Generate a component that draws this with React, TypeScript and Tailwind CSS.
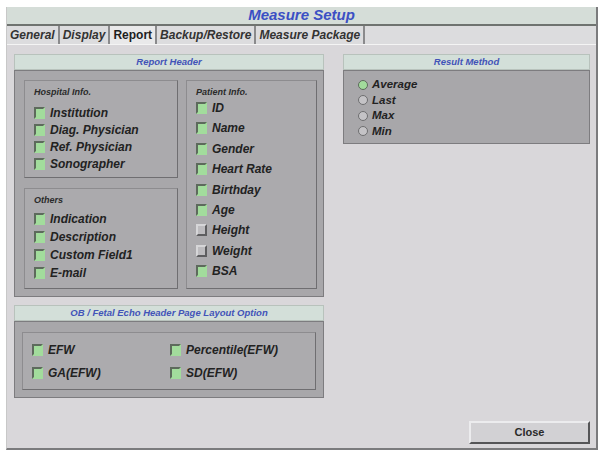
import clsx from "clsx";

const font = { fontFamily: '"Liberation Sans", Arial, sans-serif' };

type CheckProps = { label: string; on?: boolean };

const Check = ({ label, on = true }: CheckProps) => (
  <div className="flex items-center h-[17px]">
    <span
      className={clsx(
        "w-[11px] h-[12px] shrink-0 border-2",
        on
          ? "bg-[#a2dc9c] border-t-[#5d6a5c] border-l-[#5d6a5c] border-r-[#a2dc9c] border-b-[#a2dc9c]"
          : "bg-[#bdbcbf] border-t-[#d6d6d8] border-l-[#d6d6d8] border-r-[#5e5e60] border-b-[#5e5e60]"
      )}
    />
    <span className="ml-[5px] text-[12px] font-bold italic text-[#222222] leading-none">
      {label}
    </span>
  </div>
);

const Radio = ({ label, on = false }: CheckProps) => (
  <div className="flex items-center h-[15.5px]">
    <span
      className={clsx(
        "w-[10px] h-[10px] rounded-full shrink-0 border",
        on ? "bg-[#a2dc9c] border-[#5d6a5c]" : "bg-[#c4c3c6] border-[#6e6e70]"
      )}
    />
    <span className="ml-[4px] text-[11.5px] font-bold italic text-[#222222] leading-none">
      {label}
    </span>
  </div>
);

const SectionTitle = ({ children }: { children: string }) => (
  <div className="h-[16px] bg-[#d3dfd9] border border-[#b8c2bc] flex items-center justify-center text-[9.5px] font-bold italic text-[#4253b8]">
    {children}
  </div>
);

const Box = ({
  title,
  className,
  listClass,
  children,
}: {
  title: string;
  className?: string;
  listClass?: string;
  children: React.ReactNode;
}) => (
  <div
    className={clsx(
      "bg-[#abaaad] border border-t-[#8d8c8f] border-l-[#8d8c8f] border-r-[#6f6e71] border-b-[#6f6e71] px-[9px]",
      className
    )}
  >
    <div className="text-[9px] font-bold italic text-[#2a2a2a] mt-[5px] mb-[3px]">
      {title}
    </div>
    <div className={listClass}>{children}</div>
  </div>
);

const tabs = ["General", "Display", "Report", "Backup/Restore", "Measure Package"];

export default function App() {
  return (
    <div style={font} className="w-[604px] h-[454px] bg-white pt-[7px] pl-[6px] pr-[6px] pb-[4px]">
      <div className="h-full flex flex-col border-r-2 border-[#7b7b7d] border-b-2 border-l border-l-[#c8c8c8]">
        <div className="h-[19px] bg-[#d5ddd8] border-b-2 border-[#6f7370] flex items-center justify-center">
          <span className="text-[15px] font-bold italic text-[#3b4fc4]">Measure Setup</span>
        </div>
        <div className="h-[19px] bg-[#dcdcde] flex items-end border-b border-[#f4f4f4]">
          {tabs.map((t) => (
            <div
              key={t}
              className={clsx(
                "h-[18px] px-[3px] flex items-center text-[12px] font-bold border-r-2 border-[#8a8a8c]",
                t === "Report" ? "bg-[#e9e9ea] text-[#1e1e1e]" : "italic text-[#333333]"
              )}
            >
              {t}
            </div>
          ))}
        </div>
        <div className="flex-1 bg-[#d9d7da] flex flex-col pl-[7px] pr-[5px] pt-[9px] pb-[4px]">
          <div className="flex">
            <div className="w-[310px] flex flex-col">
              <SectionTitle>Report Header</SectionTitle>
              <div className="bg-[#a8a7aa] border border-[#7d7c7f] h-[227px] flex pl-[9px] pr-[6px] pt-[9px] pb-[7px] gap-[8px]">
                <div className="w-[154px] flex flex-col gap-[10px]">
                  <Box title="Hospital Info." className="h-[98px]" listClass="pt-[2px]">
                    <Check label="Institution" />
                    <Check label="Diag. Physician" />
                    <Check label="Ref. Physician" />
                    <Check label="Sonographer" />
                  </Box>
                  <Box title="Others" className="flex-1" listClass="flex flex-col gap-[1px]">
                    <Check label="Indication" />
                    <Check label="Description" />
                    <Check label="Custom Field1" />
                    <Check label="E-mail" />
                  </Box>
                </div>
                <Box title="Patient Info." className="flex-1" listClass="flex flex-col gap-[3.4px] -mt-[3px]">
                  <Check label="ID" />
                  <Check label="Name" />
                  <Check label="Gender" />
                  <Check label="Heart Rate" />
                  <Check label="Birthday" />
                  <Check label="Age" />
                  <Check label="Height" on={false} />
                  <Check label="Weight" on={false} />
                  <Check label="BSA" />
                </Box>
              </div>
            </div>
            <div className="ml-[19px] flex-1 mr-[1px]">
              <SectionTitle>Result Method</SectionTitle>
              <div className="bg-[#a8a7aa] border border-[#7d7c7f] h-[74px] pl-[14px] pt-[6px]">
                <Radio label="Average" on />
                <Radio label="Last" />
                <Radio label="Max" />
                <Radio label="Min" />
              </div>
            </div>
          </div>
          <div className="w-[310px] mt-[8px]">
            <SectionTitle>OB / Fetal Echo Header Page Layout Option</SectionTitle>
            <div className="bg-[#a8a7aa] border border-[#7d7c7f] h-[77px] px-[7px] pt-[10px]">
              <div className="h-[58px] border border-t-[#8d8c8f] border-l-[#8d8c8f] border-r-[#6f6e71] border-b-[#6f6e71] bg-[#acabae] grid grid-cols-[138px_1fr] content-center gap-y-[6px] pl-[9px]">
                <Check label="EFW" />
                <Check label="Percentile(EFW)" />
                <Check label="GA(EFW)" />
                <Check label="SD(EFW)" />
              </div>
            </div>
          </div>
          <div className="flex-1 flex items-end justify-end pr-[1px]">
            <button className="w-[121px] h-[23px] bg-[#d2d1d4] border-2 border-t-[#ececee] border-l-[#ececee] border-r-[#555557] border-b-[#555557] text-[11px] font-bold text-[#2a2a2a]">
              Close
            </button>
          </div>
        </div>
      </div>
    </div>
  );
}
